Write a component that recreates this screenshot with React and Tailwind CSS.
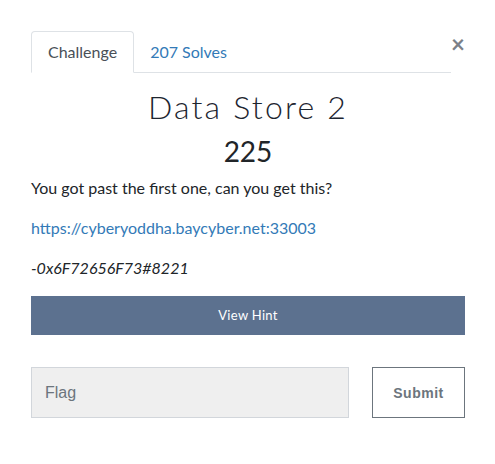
import React, { useState } from "react";

const ChallengeModal = () => {
  const [flag, setFlag] = useState("");

  return (
    <div className="w-[495px] h-[464px] bg-white font-['Lato','Noto_Sans',sans-serif] text-[#212529]">
      <div className="pt-[31px] pl-[31px] pr-[30px]">
        {/* Tabs + close */}
        <div className="flex items-start">
          <div className="flex flex-1 border-b border-[#dee2e6] h-[42px]">
            <button className="h-[42px] px-[16px] -mb-px border border-[#dee2e6] border-b-white rounded-t-[4px] bg-white text-[16px] text-[#495057]">
              Challenge
            </button>
            <button className="h-[41px] px-[16px] text-[16px] text-[#337ab7]">
              207 Solves
            </button>
          </div>
          <button className="w-[14px] mt-[1px] text-[24px] leading-[24px] font-bold text-[#7b8088]">
            ×
          </button>
        </div>

        {/* Title */}
        <h2 className="mt-[15px] text-center text-[32px] leading-[38px] font-light tracking-[2.2px] text-[#1d2530]">
          Data Store 2
        </h2>
        <h3 className="mt-[8px] text-center text-[28px] leading-[34px] text-[#212529]">
          225
        </h3>

        {/* Description */}
        <div className="mt-[8px] text-[16px] leading-[24px]">
          <p className="mb-[16px]">You got past the first one, can you get this?</p>
          <p className="mb-[16px]">
            <a href="#" className="text-[#337ab7]">https://cyberyoddha.baycyber.net:33003</a>
          </p>
          <p className="italic">-0x6F72656F73#8221</p>
        </div>

        {/* Hint */}
        <button className="mt-[16px] w-full h-[39px] bg-[#5c718f] text-white text-[13px] tracking-[0.3px]">
          View Hint
        </button>

        {/* Flag form */}
        <div className="mt-[32px] flex items-start justify-between">
          <input
            value={flag}
            onChange={(e) => setFlag(e.target.value)}
            placeholder="Flag"
            className="w-[318px] h-[51px] px-[13px] bg-[#efefef] border border-[#d2d6db] font-['Liberation_Sans',Arial,sans-serif] text-[16px] text-[#495057] placeholder:text-[#6c757d] outline-none"
          />
          <button className="w-[93px] h-[51px] pt-[2px] border border-[#6c757d] bg-white font-['Liberation_Sans',Arial,sans-serif] font-bold text-[14px] tracking-[0.5px] text-[#6c757d]">
            Submit
          </button>
        </div>
      </div>
    </div>
  );
};

export default function App() {
  return <ChallengeModal />;
}
